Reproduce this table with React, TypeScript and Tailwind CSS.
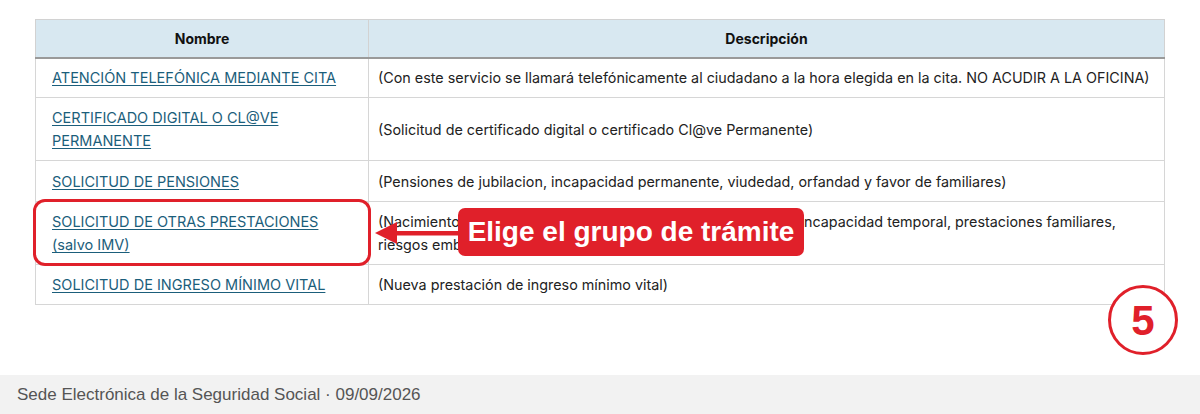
import React from "react";

const rows: { name: string[]; desc: string[]; h: string }[] = [
  {
    name: ["ATENCIÓN TELEFÓNICA MEDIANTE CITA"],
    desc: ["(Con este servicio se llamará telefónicamente al ciudadano a la hora elegida en la cita. NO ACUDIR A LA OFICINA)"],
    h: "h-[40px]",
  },
  {
    name: ["CERTIFICADO DIGITAL O CL@VE", "PERMANENTE"],
    desc: ["(Solicitud de certificado digital o certificado Cl@ve Permanente)"],
    h: "h-[63px]",
  },
  {
    name: ["SOLICITUD DE PENSIONES"],
    desc: ["(Pensiones de jubilacion, incapacidad permanente, viudedad, orfandad y favor de familiares)"],
    h: "h-[41px]",
  },
  {
    name: ["SOLICITUD DE OTRAS PRESTACIONES", "(salvo IMV)"],
    desc: ["(Nacimiento y cuidado de menor, riesgo durante el embarazo, incapacidad temporal, prestaciones familiares,", "riesgos embarazo y lactancia)"],
    h: "h-[63px]",
  },
  {
    name: ["SOLICITUD DE INGRESO MÍNIMO VITAL"],
    desc: ["(Nueva prestación de ingreso mínimo vital)"],
    h: "h-[40px]",
  },
];

export default function App() {
  return (
    <div
      className="relative w-[1200px] h-[414px] bg-white overflow-hidden flex flex-col"
      style={{ fontFamily: '"Liberation Sans", Arial, Helvetica, sans-serif' }}
    >
      <div className="h-[375px] pt-[19px] pl-[35px]">
        <table
          className="w-[1130px] table-fixed border-collapse text-[14.5px] text-[#222]"
          style={{ fontFamily: 'Inter, "Liberation Sans", Arial, sans-serif' }}
        >
          <colgroup>
            <col className="w-[333px]" />
            <col />
          </colgroup>
          <thead>
            <tr className="h-[38px] bg-[#d8e8f1]">
              <th className="border border-[#d2d2d2] border-b-2 border-b-[#9a9a9a] font-bold text-[14px] text-center text-[#111]">
                Nombre
              </th>
              <th className="border border-[#d2d2d2] border-b-2 border-b-[#9a9a9a] font-bold text-[14px] text-center text-[#111]">
                Descripción
              </th>
            </tr>
          </thead>
          <tbody>
            {rows.map((r, i) => (
              <tr key={i} className={r.h}>
                <td className="border border-[#d6d6d6] pl-[16px] pr-2 align-middle leading-[23px]">
                  <a className="text-[#1b5e7b] underline underline-offset-2 decoration-1">
                    {r.name.map((l, j) => (
                      <React.Fragment key={j}>
                        {j > 0 && <br />}
                        {l}
                      </React.Fragment>
                    ))}
                  </a>
                </td>
                <td className="border border-[#d6d6d6] pl-[9px] pr-1 align-middle leading-[23px] whitespace-nowrap overflow-hidden text-[14.35px]">
                  {r.desc.map((l, j) => (
                    <React.Fragment key={j}>
                      {j > 0 && <br />}
                      {l}
                    </React.Fragment>
                  ))}
                </td>
              </tr>
            ))}
          </tbody>
        </table>
      </div>
      <div className="h-[39px] bg-[#f2f2f2] pl-[17px] flex items-center text-[17px] text-[#555]">
        Sede Electrónica de la Seguridad Social · 09/09/2026
      </div>

      {/* highlight box around cell */}
      <div className="absolute left-[33px] top-[199px] w-[338px] h-[67px] border-[3px] border-[#e0202a] rounded-[12px]" />

      {/* arrow */}
      <svg className="absolute left-[373px] top-[221px]" width="92" height="24" viewBox="0 0 92 24">
        <rect x="18" y="10" width="74" height="4.5" fill="#e0202a" />
        <polygon points="2,12 24,1 24,23" fill="#e0202a" />
      </svg>

      {/* callout */}
      <div className="absolute left-[458px] top-[208px] w-[346px] h-[48px] bg-[#e0202a] rounded-[7px] flex items-center justify-center text-white font-bold text-[28px]">
        Elige el grupo de trámite
      </div>

      {/* step number */}
      <div className="absolute left-[1108px] top-[285px] w-[70px] h-[70px] rounded-full border-[3px] border-[#e0202a] bg-white flex items-center justify-center text-[#e0202a] font-bold text-[42px]">
        5
      </div>
    </div>
  );
}
